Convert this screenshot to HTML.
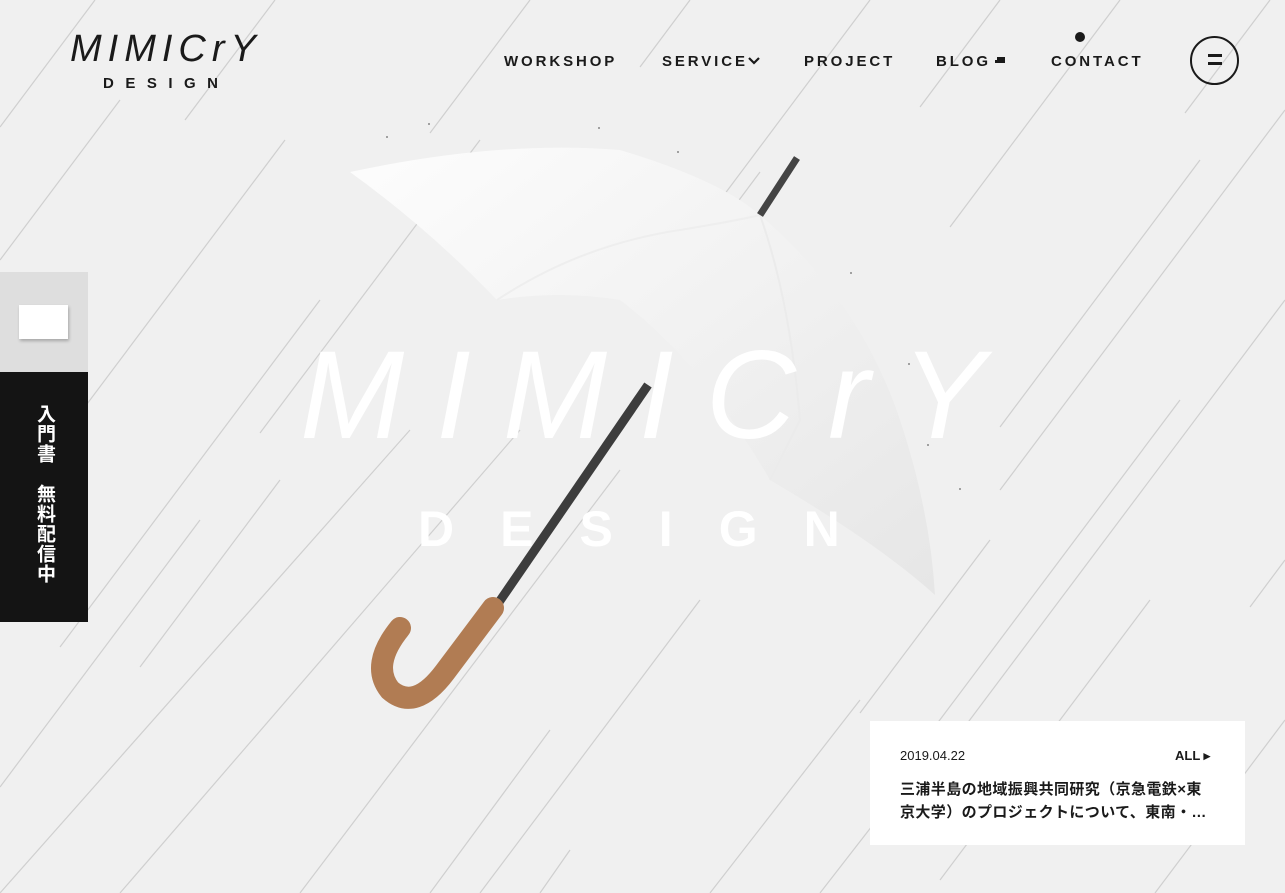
<!DOCTYPE html>
<html><head><meta charset="utf-8">
<style>
html,body{margin:0;padding:0;overflow:hidden}
body{width:1285px;height:893px;background:#f0f0f0;position:relative;overflow:hidden;font-family:"Liberation Sans","Noto Sans CJK JP",sans-serif}
.nav{position:absolute;top:53px;font-size:15px;font-weight:bold;letter-spacing:2.9px;color:#1a1a1a}
.side1{position:absolute;left:0;top:272px;width:88px;height:100px;background:#dedede}
.side2{position:absolute;left:0;top:372px;width:88px;height:250px;background:#141414;color:#fff}
.vt{position:absolute;left:33px;top:32px;writing-mode:vertical-rl;font-size:19px;font-weight:bold;letter-spacing:1px;line-height:22px}
.card{position:absolute;left:870px;top:721px;width:375px;height:124px;background:#fff}
</style></head><body>
<svg width="1285" height="893" style="position:absolute;left:0;top:0" stroke="#cfcfcf" stroke-width="1.2">
<line x1="95" y1="0" x2="0" y2="127"/>
<line x1="275" y1="0" x2="185" y2="120"/>
<line x1="120" y1="100" x2="0" y2="260"/>
<line x1="285" y1="140" x2="60" y2="440"/>
<line x1="530" y1="0" x2="430" y2="133"/>
<line x1="480" y1="140" x2="260" y2="433"/>
<line x1="320" y1="300" x2="60" y2="647"/>
<line x1="200" y1="520" x2="0" y2="787"/>
<line x1="280" y1="480" x2="140" y2="667"/>
<line x1="410" y1="430" x2="0" y2="893"/>
<line x1="520" y1="430" x2="120" y2="893"/>
<line x1="620" y1="470" x2="300" y2="893"/>
<line x1="700" y1="600" x2="480" y2="893"/>
<line x1="550" y1="730" x2="430" y2="893"/>
<line x1="570" y1="850" x2="540" y2="893"/>
<line x1="760" y1="172" x2="713" y2="235"/>
<line x1="690" y1="0" x2="640" y2="67"/>
<line x1="870" y1="0" x2="700" y2="227"/>
<line x1="1000" y1="0" x2="920" y2="107"/>
<line x1="1120" y1="0" x2="950" y2="227"/>
<line x1="1270" y1="0" x2="1185" y2="113"/>
<line x1="1285" y1="110" x2="1000" y2="490"/>
<line x1="1285" y1="300" x2="960" y2="733"/>
<line x1="1180" y1="400" x2="900" y2="773"/>
<line x1="1150" y1="600" x2="940" y2="880"/>
<line x1="860" y1="700" x2="710" y2="893"/>
<line x1="900" y1="790" x2="820" y2="893"/>
<line x1="1285" y1="720" x2="1155" y2="893"/>
<line x1="1285" y1="560" x2="1250" y2="607"/>
<line x1="990" y1="540" x2="860" y2="713"/>
<line x1="1200" y1="160" x2="1000" y2="427"/>
</svg>
<svg width="220" height="80" style="position:absolute;left:60px;top:20px">
<text x="10" y="41" font-family="Liberation Sans" font-size="38" font-style="italic" fill="#1a1a1a" letter-spacing="6">MIMICrY</text>
<text x="43" y="68" font-family="Liberation Sans" font-size="15" font-weight="bold" fill="#1a1a1a" letter-spacing="11.5">DESIGN</text>
</svg>
<div class="nav" style="left:504px">WORKSHOP</div>
<div class="nav" style="left:662px">SERVICE</div>
<svg width="12" height="8" style="position:absolute;left:748px;top:57px"><path d="M1 1 L6 6 L11 1" stroke="#1a1a1a" stroke-width="2.2" fill="none"/></svg>
<div class="nav" style="left:804px">PROJECT</div>
<div class="nav" style="left:936px">BLOG</div>
<div style="position:absolute;left:997px;top:57px;width:8px;height:6px;background:#1a1a1a"></div>
<div style="position:absolute;left:995px;top:60px;width:4px;height:3px;background:#1a1a1a"></div>
<div class="nav" style="left:1051px">CONTACT</div>
<div style="position:absolute;left:1075px;top:32px;width:10px;height:10px;border-radius:50%;background:#1a1a1a"></div>
<div style="position:absolute;left:1190px;top:36px;width:45px;height:45px;border:2.5px solid #1a1a1a;border-radius:50%"></div>
<div style="position:absolute;left:1208px;top:54px;width:14px;height:3px;background:#1a1a1a"></div>
<div style="position:absolute;left:1208px;top:62px;width:14px;height:3px;background:#1a1a1a"></div>
<svg width="1285" height="893" style="position:absolute;left:0;top:0">
<defs><linearGradient id="g" x1="0" y1="0" x2="1" y2="1"><stop offset="0" stop-color="#fdfdfd"/><stop offset="1" stop-color="#e6e6e6"/></linearGradient></defs>
<path d="M350,172 Q500,140 620,150 Q720,180 760,215 Q860,300 900,420 Q930,510 935,595 Q880,545 770,480 Q700,360 620,300 Q560,290 497,300 Q430,230 350,172 Z" fill="url(#g)"/>
<path d="M497,300 Q580,245 680,230 Q740,220 760,215" stroke="#eee" stroke-width="2" fill="none"/>
<path d="M760,215 Q790,300 800,420 Q780,460 770,480" stroke="#ebebeb" stroke-width="2" fill="none"/>
<line x1="760" y1="215" x2="797" y2="158" stroke="#444" stroke-width="7"/>
<line x1="648" y1="385" x2="495" y2="608" stroke="#3d3d3d" stroke-width="9"/>
<path d="M493,608 L445,672 Q415,712 390,690 Q370,665 400,628" stroke="#b17c53" stroke-width="22" fill="none" stroke-linecap="round"/>
<g font-family="Liberation Sans" fill="#fff">
<text x="300" y="438" font-size="125" font-style="italic" letter-spacing="32">MIMICrY</text>
<text x="418" y="546" font-size="50" font-weight="bold" letter-spacing="46">DESIGN</text>
</g>
<g fill="#888"><circle cx="429" cy="124" r="1"/><circle cx="599" cy="128" r="1"/><circle cx="678" cy="152" r="1"/><circle cx="851" cy="273" r="1"/><circle cx="909" cy="364" r="1"/><circle cx="928" cy="445" r="1"/><circle cx="960" cy="489" r="1"/><circle cx="387" cy="137" r="1"/></g>
</svg>
<div class="side1"><div style="position:absolute;left:19px;top:33px;width:49px;height:34px;background:#fff;box-shadow:1px 2px 3px rgba(0,0,0,.25)"></div></div>
<div class="side2"><div class="vt">入門書　無料配信中</div></div>
<div class="card">
<div style="position:absolute;left:30px;top:27px;font-size:13px;color:#1a1a1a">2019.04.22</div>
<div style="position:absolute;left:305px;top:27px;font-size:13px;font-weight:bold;color:#1a1a1a">ALL ▸</div>
<div style="position:absolute;left:30px;top:57px;width:316px;font-size:15px;font-weight:bold;line-height:23px;letter-spacing:0.4px;color:#1a1a1a">三浦半島の地域振興共同研究（京急電鉄×東京大学）のプロジェクトについて、東南・…</div>
</div>
</body></html>
